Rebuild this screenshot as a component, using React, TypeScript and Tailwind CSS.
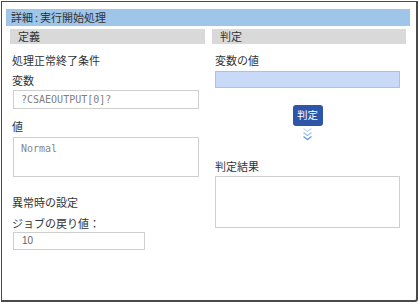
import React from "react";

function Chevrons() {
  return (
    <svg width="11" height="15" viewBox="0 0 11 15" className="block">
      <polyline points="1.5,1.5 5.5,4.5 9.5,1.5" fill="none" stroke="#c3d6f3" strokeWidth="1.2" />
      <polyline points="1.5,5.5 5.5,8.5 9.5,5.5" fill="none" stroke="#9dbdee" strokeWidth="1.2" />
      <polyline points="1.5,9.5 5.5,12.5 9.5,9.5" fill="none" stroke="#6e9ce6" strokeWidth="1.4" />
    </svg>
  );
}

export default function App() {
  return (
    <div className="w-[420px] h-[304px] bg-white font-['Noto_Sans_CJK_JP',sans-serif] text-[11px] text-[#333]">
      <div className="ml-[1px] mt-[1px] w-[417px] h-[301px] border-l border-t border-r-2 border-b-2 border-[#4a4a4a] rounded-br-[3px] bg-white">
        <div className="ml-[4px] mt-[7px] w-[404px] h-[17px] bg-[#9fc5e8] flex items-center pl-[5px] leading-none">
          <span>詳細</span>
          <span className="mx-[2px]">:</span>
          <span>実行開始処理</span>
        </div>
        <div className="flex ml-[8px] mt-[3px] gap-[7px]">
          {/* left column */}
          <div className="w-[195px] flex flex-col">
            <div className="h-[15px] bg-[#d9d9d9] flex items-center pl-[8px] leading-none">定義</div>
            <div className="px-[2px] flex flex-col">
              <div className="mt-[8px] h-[16px] leading-[16px]">処理正常終了条件</div>
              <div className="mt-[4px] h-[16px] leading-[16px]">変数</div>
              <div className="mt-[2px] ml-[1px] w-[186px] h-[19px] border border-[#cfcfcf] flex items-center pl-[7px] font-['DejaVu_Sans_Mono',monospace] text-[10px] text-[#808080] leading-none">
                ?CSAEOUTPUT[0]?
              </div>
              <div className="mt-[9px] h-[16px] leading-[16px]">値</div>
              <div className="mt-[3px] ml-[1px] w-[186px] h-[40px] border border-[#cfcfcf] pl-[7px] pt-[6px] font-['DejaVu_Sans_Mono',monospace] text-[10px] text-[#888] leading-none">
                Normal
              </div>
              <div className="mt-[17px] h-[16px] leading-[16px]">異常時の設定</div>
              <div className="mt-[5px] h-[16px] leading-[16px]">ジョブの戻り値：</div>
              <div className="mt-[1px] ml-[1px] w-[132px] h-[18px] border border-[#cfcfcf] flex items-center pl-[8px] text-[10px] text-[#666] leading-none font-['Liberation_Sans',sans-serif]">
                10
              </div>
            </div>
          </div>
          {/* right column */}
          <div className="w-[194px] flex flex-col">
            <div className="h-[15px] bg-[#d9d9d9] flex items-center pl-[8px] leading-none">判定</div>
            <div className="pl-[3px] w-[188px] flex flex-col">
              <div className="mt-[8px] h-[16px] leading-[16px]">変数の値</div>
              <div className="mt-[3px] w-[185px] h-[17px] bg-[#c9daf8] border border-[#a4c2f4]"></div>
              <div className="w-[185px] flex flex-col items-center">
                <div className="mt-[17px] w-[30px] h-[21px] rounded-[3px] bg-[#2d56aa] text-white flex items-center justify-center text-[10.5px] leading-none">
                  判定
                </div>
                <div className="mt-[1px]">
                  <Chevrons />
                </div>
              </div>
              <div className="mt-[16px] h-[16px] leading-[16px]">判定結果</div>
              <div className="mt-[2px] w-[185px] h-[52px] border border-[#cfcfcf]"></div>
            </div>
          </div>
        </div>
      </div>
    </div>
  );
}
